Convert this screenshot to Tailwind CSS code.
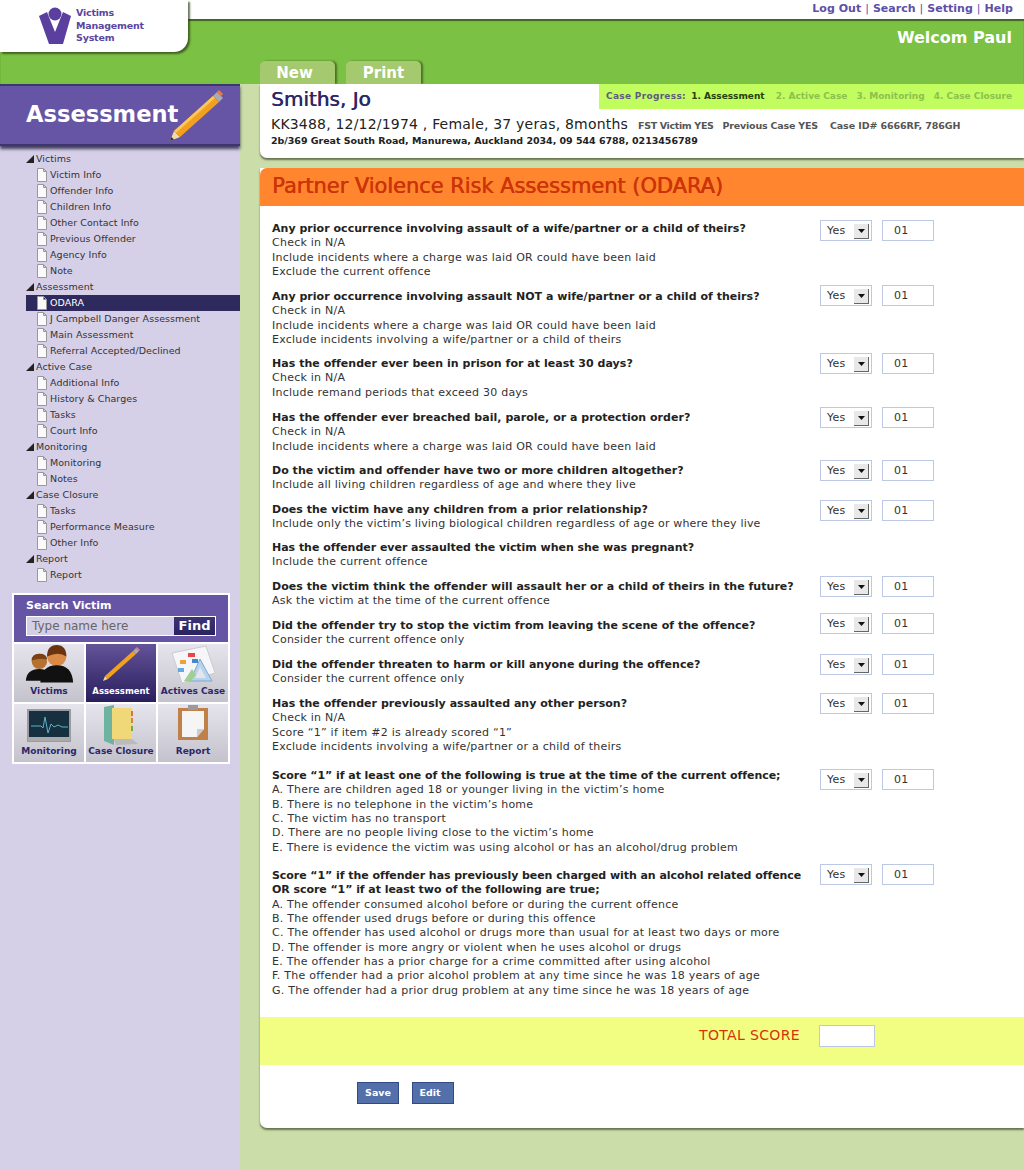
<!DOCTYPE html>
<html lang="en">
<head>
    <meta charset="UTF-8">
    <title>Victims Management System</title>
    <script src="https://cdn.jsdelivr.net/npm/@tailwindcss/browser@4"></script>
</head>
<body class="bg-[#cbdea9] font-['DejaVu_Sans',sans-serif] text-[11px] text-[#333]">
<div class="relative w-[1024px] h-[1170px] overflow-hidden flex flex-col">

    <!-- Logo -->
    <div class="absolute left-0 top-0 z-10 w-[188px] h-[52px] bg-white rounded-br-[14px] shadow-[2px_2px_2px_rgba(40,60,20,0.7)] flex">
        <svg class="ml-[39px] mt-[7px] w-[32px] h-[37px]" viewBox="0 0 32 37">
            <circle cx="16" cy="7" r="6.5" fill="#5b3f9e"/>
            <path d="M0 9 L8 5 L16 25 L24 5 L32 9 L24 37 L10 37 Z" fill="#5b3f9e"/>
        </svg>
        <div class="ml-[5px] mt-[7px] text-[9.5px] tracking-[-0.2px] leading-[12.5px] font-bold text-[#5a46a0]">Victims<br>Management<br>System</div>
    </div>

    <!-- Top links -->
    <div class="h-[19px] bg-white flex justify-end items-center pr-[11px] text-[11px] font-bold text-[#5d50a8] tracking-[0.02px] gap-[4px]">
        <span>Log Out</span><span class="font-normal">|</span><span>Search</span><span class="font-normal">|</span><span>Setting</span><span class="font-normal">|</span><span>Help</span>
    </div>

    <!-- Green band -->
    <div class="h-[65px] bg-[#7bc143] shadow-[inset_0_2px_1px_rgba(40,60,20,0.7)] flex flex-col">
        <div class="text-right pr-[12px] pt-[9px] text-[16px] leading-[20px] font-bold text-white">Welcom Paul</div>
        <div class="mt-auto ml-[260px] flex gap-[11px]">
            <div class="w-[75px] h-[23px] pr-[6px] bg-[#a5c96e] rounded-t-[5px] shadow-[2px_0_2px_rgba(40,60,20,0.6)] text-center text-[15px] leading-[25px] font-bold text-white">New</div>
            <div class="w-[75px] h-[23px] bg-[#a5c96e] rounded-t-[5px] shadow-[2px_0_2px_rgba(40,60,20,0.6)] text-center text-[15px] leading-[25px] font-bold text-white">Print</div>
        </div>
    </div>

    <div class="flex flex-1">
        <!-- Sidebar -->
        <aside class="w-[240px] bg-[#d6cfe8] flex flex-col">
            <div class="h-[62px] bg-[#6655a5] border-y-2 border-[#3f3570] shadow-[0_3px_3px_rgba(30,25,60,0.8)] flex items-center pl-[26px] relative">
                <span class="text-[22.6px] font-bold text-white">Assessment</span>
                <svg class="absolute left-[168px] top-[3px] w-[56px] h-[54px]" viewBox="0 0 56 54">
                    <polygon points="2,52 6,42 12,48" fill="#f3d9a8"/>
                    <polygon points="2,52 3.5,48 6,50.5" fill="#333"/>
                    <polygon points="6,42 45,7 51,13 12,48" fill="#f2a01e"/>
                    <polygon points="6,42 45,7 47,9 8,44" fill="#fbc75a"/>
                    <polygon points="45,7 49,3 55,9 51,13" fill="#a9a9b0"/>
                    <polygon points="49,3 51,1 55,5 53,7" fill="#ee7b3c"/>
                </svg>
            </div>

            <nav class="mt-[5px] pl-[26px] text-[9.5px] leading-[16px] text-[#333] tracking-[0.05px]">
                <div class="flex items-center h-[16px]"><span class="w-[10px] text-[#222]"><svg class="w-[8px] h-[8px]" viewBox="0 0 8 8"><polygon points="0,8 8,0 8,8" fill="#222"/></svg></span>Victims</div>
                <div class="flex items-center h-[16px] pl-[10px]"><svg class="w-[14px] h-[14px] shrink-0" viewBox="0 0 14 14"><path d="M1.5 .5H7.5L10.5 3.5V13.5H1.5Z M7.5 .5V3.5H10.5" fill="#fafafa" stroke="#999"/></svg>Victim Info</div>
                <div class="flex items-center h-[16px] pl-[10px]"><svg class="w-[14px] h-[14px] shrink-0" viewBox="0 0 14 14"><path d="M1.5 .5H7.5L10.5 3.5V13.5H1.5Z M7.5 .5V3.5H10.5" fill="#fafafa" stroke="#999"/></svg>Offender Info</div>
                <div class="flex items-center h-[16px] pl-[10px]"><svg class="w-[14px] h-[14px] shrink-0" viewBox="0 0 14 14"><path d="M1.5 .5H7.5L10.5 3.5V13.5H1.5Z M7.5 .5V3.5H10.5" fill="#fafafa" stroke="#999"/></svg>Children Info</div>
                <div class="flex items-center h-[16px] pl-[10px]"><svg class="w-[14px] h-[14px] shrink-0" viewBox="0 0 14 14"><path d="M1.5 .5H7.5L10.5 3.5V13.5H1.5Z M7.5 .5V3.5H10.5" fill="#fafafa" stroke="#999"/></svg>Other Contact Info</div>
                <div class="flex items-center h-[16px] pl-[10px]"><svg class="w-[14px] h-[14px] shrink-0" viewBox="0 0 14 14"><path d="M1.5 .5H7.5L10.5 3.5V13.5H1.5Z M7.5 .5V3.5H10.5" fill="#fafafa" stroke="#999"/></svg>Previous Offender</div>
                <div class="flex items-center h-[16px] pl-[10px]"><svg class="w-[14px] h-[14px] shrink-0" viewBox="0 0 14 14"><path d="M1.5 .5H7.5L10.5 3.5V13.5H1.5Z M7.5 .5V3.5H10.5" fill="#fafafa" stroke="#999"/></svg>Agency Info</div>
                <div class="flex items-center h-[16px] pl-[10px]"><svg class="w-[14px] h-[14px] shrink-0" viewBox="0 0 14 14"><path d="M1.5 .5H7.5L10.5 3.5V13.5H1.5Z M7.5 .5V3.5H10.5" fill="#fafafa" stroke="#999"/></svg>Note</div>
                <div class="flex items-center h-[16px]"><span class="w-[10px]"><svg class="w-[8px] h-[8px]" viewBox="0 0 8 8"><polygon points="0,8 8,0 8,8" fill="#222"/></svg></span>Assessment</div>
                <div class="flex items-center h-[16px] pl-[10px] bg-[#2f2a5e] text-white"><svg class="w-[14px] h-[14px] shrink-0" viewBox="0 0 14 14"><path d="M1.5 .5H7.5L10.5 3.5V13.5H1.5Z M7.5 .5V3.5H10.5" fill="#fafafa" stroke="#999"/></svg>ODARA</div>
                <div class="flex items-center h-[16px] pl-[10px]"><svg class="w-[14px] h-[14px] shrink-0" viewBox="0 0 14 14"><path d="M1.5 .5H7.5L10.5 3.5V13.5H1.5Z M7.5 .5V3.5H10.5" fill="#fafafa" stroke="#999"/></svg>J Campbell Danger Assessment</div>
                <div class="flex items-center h-[16px] pl-[10px]"><svg class="w-[14px] h-[14px] shrink-0" viewBox="0 0 14 14"><path d="M1.5 .5H7.5L10.5 3.5V13.5H1.5Z M7.5 .5V3.5H10.5" fill="#fafafa" stroke="#999"/></svg>Main Assessment</div>
                <div class="flex items-center h-[16px] pl-[10px]"><svg class="w-[14px] h-[14px] shrink-0" viewBox="0 0 14 14"><path d="M1.5 .5H7.5L10.5 3.5V13.5H1.5Z M7.5 .5V3.5H10.5" fill="#fafafa" stroke="#999"/></svg>Referral Accepted/Declined</div>
                <div class="flex items-center h-[16px]"><span class="w-[10px]"><svg class="w-[8px] h-[8px]" viewBox="0 0 8 8"><polygon points="0,8 8,0 8,8" fill="#222"/></svg></span>Active Case</div>
                <div class="flex items-center h-[16px] pl-[10px]"><svg class="w-[14px] h-[14px] shrink-0" viewBox="0 0 14 14"><path d="M1.5 .5H7.5L10.5 3.5V13.5H1.5Z M7.5 .5V3.5H10.5" fill="#fafafa" stroke="#999"/></svg>Additional Info</div>
                <div class="flex items-center h-[16px] pl-[10px]"><svg class="w-[14px] h-[14px] shrink-0" viewBox="0 0 14 14"><path d="M1.5 .5H7.5L10.5 3.5V13.5H1.5Z M7.5 .5V3.5H10.5" fill="#fafafa" stroke="#999"/></svg>History &amp; Charges</div>
                <div class="flex items-center h-[16px] pl-[10px]"><svg class="w-[14px] h-[14px] shrink-0" viewBox="0 0 14 14"><path d="M1.5 .5H7.5L10.5 3.5V13.5H1.5Z M7.5 .5V3.5H10.5" fill="#fafafa" stroke="#999"/></svg>Tasks</div>
                <div class="flex items-center h-[16px] pl-[10px]"><svg class="w-[14px] h-[14px] shrink-0" viewBox="0 0 14 14"><path d="M1.5 .5H7.5L10.5 3.5V13.5H1.5Z M7.5 .5V3.5H10.5" fill="#fafafa" stroke="#999"/></svg>Court Info</div>
                <div class="flex items-center h-[16px]"><span class="w-[10px]"><svg class="w-[8px] h-[8px]" viewBox="0 0 8 8"><polygon points="0,8 8,0 8,8" fill="#222"/></svg></span>Monitoring</div>
                <div class="flex items-center h-[16px] pl-[10px]"><svg class="w-[14px] h-[14px] shrink-0" viewBox="0 0 14 14"><path d="M1.5 .5H7.5L10.5 3.5V13.5H1.5Z M7.5 .5V3.5H10.5" fill="#fafafa" stroke="#999"/></svg>Monitoring</div>
                <div class="flex items-center h-[16px] pl-[10px]"><svg class="w-[14px] h-[14px] shrink-0" viewBox="0 0 14 14"><path d="M1.5 .5H7.5L10.5 3.5V13.5H1.5Z M7.5 .5V3.5H10.5" fill="#fafafa" stroke="#999"/></svg>Notes</div>
                <div class="flex items-center h-[16px]"><span class="w-[10px]"><svg class="w-[8px] h-[8px]" viewBox="0 0 8 8"><polygon points="0,8 8,0 8,8" fill="#222"/></svg></span>Case Closure</div>
                <div class="flex items-center h-[16px] pl-[10px]"><svg class="w-[14px] h-[14px] shrink-0" viewBox="0 0 14 14"><path d="M1.5 .5H7.5L10.5 3.5V13.5H1.5Z M7.5 .5V3.5H10.5" fill="#fafafa" stroke="#999"/></svg>Tasks</div>
                <div class="flex items-center h-[16px] pl-[10px]"><svg class="w-[14px] h-[14px] shrink-0" viewBox="0 0 14 14"><path d="M1.5 .5H7.5L10.5 3.5V13.5H1.5Z M7.5 .5V3.5H10.5" fill="#fafafa" stroke="#999"/></svg>Performance Measure</div>
                <div class="flex items-center h-[16px] pl-[10px]"><svg class="w-[14px] h-[14px] shrink-0" viewBox="0 0 14 14"><path d="M1.5 .5H7.5L10.5 3.5V13.5H1.5Z M7.5 .5V3.5H10.5" fill="#fafafa" stroke="#999"/></svg>Other Info</div>
                <div class="flex items-center h-[16px]"><span class="w-[10px]"><svg class="w-[8px] h-[8px]" viewBox="0 0 8 8"><polygon points="0,8 8,0 8,8" fill="#222"/></svg></span>Report</div>
                <div class="flex items-center h-[16px] pl-[10px]"><svg class="w-[14px] h-[14px] shrink-0" viewBox="0 0 14 14"><path d="M1.5 .5H7.5L10.5 3.5V13.5H1.5Z M7.5 .5V3.5H10.5" fill="#fafafa" stroke="#999"/></svg>Report</div>
            </nav>

            <!-- Search + tiles -->
            <div class="mt-[10px] ml-[12px] w-[218px] border-2 border-white bg-white">
                <div class="h-[47px] bg-[#6655a5] px-[12px] pt-[3px]">
                    <div class="text-[11px] leading-[15px] font-bold text-white">Search Victim</div>
                    <div class="mt-[3px] h-[20px] border border-white bg-[#d5cfe6] flex">
                        <span class="flex-1 pl-[5px] text-[12px] leading-[18px] text-[#666]">Type name here</span>
                        <span class="w-[41px] bg-gradient-to-b from-[#3d3478] to-[#2a2360] text-center text-[13px] leading-[18px] font-bold text-white">Find</span>
                    </div>
                </div>
                <div class="mt-[2px] grid grid-cols-[70px_70px_70px] grid-rows-[58px_58px] gap-[2px] text-[9px] font-bold text-center text-[#2c2768]">
                    <div class="bg-gradient-to-b from-[#e6e4ec] to-[#c4c2cc] flex flex-col items-center justify-end pb-[4px]">
                        <svg class="w-[52px] h-[42px]" viewBox="0 0 52 42">
                            <circle cx="16" cy="18" r="8" fill="#b5712f"/><path d="M2 38 Q3 26 16 26 Q28 26 30 38 Z" fill="#111"/>
                            <path d="M16 10 Q8 10 8 17 Q16 14 24 16 Q24 10 16 10Z" fill="#7a3f12"/>
                            <circle cx="34" cy="13" r="10" fill="#d98a45"/><path d="M24 13 Q24 1 34 1 Q44 1 44 13 Q36 7 24 13Z" fill="#6b3410"/>
                            <path d="M17 40 Q18 22 34 22 Q50 22 51 40 Z" fill="#111"/>
                        </svg>
                        Victims
                    </div>
                    <div class="bg-gradient-to-b from-[#645399] to-[#2a1f5e] flex flex-col items-center justify-end pb-[4px] text-white text-[8.5px]">
                        <svg class="w-[40px] h-[40px]" viewBox="0 0 40 40">
                            <polygon points="2,36 4,31 7,34" fill="#eed5a0"/><polygon points="4,31 32,6 35,9 7,34" fill="#f2a01e"/>
                            <polygon points="32,6 35,3 38,6 35,9" fill="#aaa"/><polygon points="35,3 36,2 39,5 38,6" fill="#ee7b7b"/>
                        </svg>
                        Assessment
                    </div>
                    <div class="bg-gradient-to-b from-[#e6e4ec] to-[#c4c2cc] flex flex-col items-center justify-end pb-[4px]">
                        <svg class="w-[46px] h-[40px]" viewBox="0 0 46 40">
                            <polygon points="2,8 36,1 45,28 12,38" fill="#f6f6fa" stroke="#ccc"/>
                            <rect x="18" y="8" width="7" height="4" fill="#e44"/><rect x="10" y="15" width="6" height="4" fill="#e8a33a"/><rect x="22" y="14" width="6" height="4" fill="#48c"/><rect x="8" y="23" width="6" height="4" fill="#6ad"/>
                            <polygon points="30,14 42,36 20,36" fill="#b5d3ee" stroke="#7fa8cc"/><polygon points="30,22 36,33 25,33" fill="#e6e4ec"/>
                            <path d="M14 36 L22 24 L26 30 L20 37Z" fill="#9fd08f"/>
                        </svg>
                        Actives Case
                    </div>
                    <div class="bg-gradient-to-b from-[#e6e4ec] to-[#c4c2cc] flex flex-col items-center justify-end pb-[4px]">
                        <svg class="w-[44px] h-[33px] mb-[3px]" viewBox="0 0 44 33">
                            <rect x="1" y="1" width="42" height="31" fill="#16303f" stroke="#9a9aa0" stroke-width="2"/>
                            <rect x="1" y="28" width="42" height="4" fill="#aaa"/>
                            <path d="M4 17H14L16 19L18 8L21 24L24 15L27 18L31 16L35 18H41" fill="none" stroke="#5fb0c8"/>
                        </svg>
                        Monitoring
                    </div>
                    <div class="bg-gradient-to-b from-[#e6e4ec] to-[#c4c2cc] flex flex-col items-center justify-end pb-[4px]">
                        <svg class="w-[38px] h-[40px]" viewBox="0 0 38 40">
                            <polygon points="2,2 12,0 12,40 2,36" fill="#6eb3a0"/>
                            <rect x="10" y="3" width="20" height="31" fill="#f0d878"/>
                            <rect x="29" y="6" width="2" height="5" fill="#d8743c"/><rect x="29" y="13" width="2" height="5" fill="#c84"/><rect x="29" y="21" width="2" height="5" fill="#7a4"/>
                            <polygon points="12,34 30,34 36,39 14,40" fill="#bbb"/>
                        </svg>
                        Case Closure
                    </div>
                    <div class="bg-gradient-to-b from-[#e6e4ec] to-[#c4c2cc] flex flex-col items-center justify-end pb-[4px]">
                        <svg class="w-[30px] h-[35px] mb-[5px]" viewBox="0 0 30 35">
                            <rect x="0" y="3" width="30" height="32" fill="#c08048"/>
                            <rect x="10" y="0" width="10" height="5" fill="#9a9aa0"/>
                            <path d="M4 6H26V24L19 32H4Z" fill="#f5f5f5"/><path d="M26 24L19 32V24Z" fill="#ccc"/>
                        </svg>
                        Report
                    </div>
                </div>
            </div>
        </aside>

        <!-- Main column -->
        <main class="flex-1 pl-[20px]">
            <!-- Person card -->
            <section class="relative h-[74px] bg-white rounded-bl-[7px] shadow-[0_2px_2px_rgba(60,70,40,0.7)] pl-[11px]">
                <div class="absolute right-0 top-0 w-[425px] h-[25px] bg-[#c1fd5f] pl-[7px] flex items-center gap-[9px] whitespace-nowrap text-[9px] font-bold text-[#8dc04e]">
                    <span class="mr-[2px]"><span class="tracking-[0.3px] text-[#5f5a80]">Case Progress:</span> <span class="ml-[2px] text-[#26400c]">1. Assessment</span></span>
                    <span>2. Active Case</span><span>3. Monitoring</span><span>4. Case Closure</span>
                </div>
                <h1 class="pt-[3px] text-[20px] leading-[24px] [text-shadow:0.6px_0_0_#2d2768] text-[#2d2768]">Smiths, Jo</h1>
                <div class="mt-[5px] flex items-baseline text-[#555] text-[9.5px] font-bold">
                    <span class="text-[14px] leading-[16px] tracking-[0.2px] font-normal text-[#222] mr-[10px]">KK3488, 12/12/1974 , Female, 37 yeras, 8months</span>
                    <span class="tracking-[-0.35px]">FST Victim YES</span><span class="ml-[9px] tracking-[-0.2px]">Previous Case YES</span><span class="ml-[12px] tracking-[-0.1px]">Case ID# 6666RF, 786GH</span>
                </div>
                <div class="mt-[1px] text-[9.5px] leading-[13px] tracking-[-0.04px] font-bold text-[#222]">2b/369 Great South Road, Manurewa, Auckland 2034, 09 544 6788, 0213456789</div>
            </section>

            <!-- Form -->
            <section class="mt-[10px] h-[960px] bg-white rounded-bl-[7px] shadow-[0_2px_2px_rgba(60,70,40,0.7)] flex flex-col">
                <h2 class="h-[38px] bg-[#ff862f] rounded-tl-[7px] pl-[12px] text-[21px] tracking-[-0.05px] leading-[36px] [text-shadow:0.6px_0_0_#cc3308] text-[#cc3308]">Partner Violence Risk Assessment (ODARA)</h2>

                <div class="pt-[16px] pl-[12px] leading-[14.33px] tracking-[0.24px] text-[#333]">
                    <div class="flex h-[68px]"><div class="w-[548px]"><b class="block text-[#222] tracking-[0.03px]">Any prior occurrence involving assault of a wife/partner or a child of theirs?</b>Check in N/A<br>Include incidents where a charge was laid OR could have been laid<br>Exclude the current offence</div>
                        <div class="flex gap-[10px] mt-[-2px]"><div class="w-[52px] h-[21px] border border-[#bcc8e4] flex items-center justify-between pl-[6px] pr-[2px] pt-[1px]">Yes<span class="w-[15px] h-[15px] bg-[#e8e8e8] border-r border-b border-[#666] flex items-center justify-center"><svg class="w-[7px] h-[4px]" viewBox="0 0 7 4"><polygon points="0,0 7,0 3.5,4" fill="#111"/></svg></span></div><div class="w-[52px] h-[21px] border border-[#bcc8e4] pl-[11px] leading-[20px]">01</div></div></div>

                    <div class="flex h-[67px]"><div class="w-[548px]"><b class="block text-[#222] tracking-[0.03px]">Any prior occurrence involving assault NOT a wife/partner or a child of theirs?</b>Check in N/A<br>Include incidents where a charge was laid OR could have been laid<br>Exclude incidents involving a wife/partner or a child of theirs</div>
                        <div class="flex gap-[10px] mt-[-5px]"><div class="w-[52px] h-[21px] border border-[#bcc8e4] flex items-center justify-between pl-[6px] pr-[2px] pt-[1px]">Yes<span class="w-[15px] h-[15px] bg-[#e8e8e8] border-r border-b border-[#666] flex items-center justify-center"><svg class="w-[7px] h-[4px]" viewBox="0 0 7 4"><polygon points="0,0 7,0 3.5,4" fill="#111"/></svg></span></div><div class="w-[52px] h-[21px] border border-[#bcc8e4] pl-[11px] leading-[20px]">01</div></div></div>

                    <div class="flex h-[54px]"><div class="w-[548px]"><b class="block text-[#222] tracking-[0.03px]">Has the offender ever been in prison for at least 30 days?</b>Check in N/A<br>Include remand periods that exceed 30 days</div>
                        <div class="flex gap-[10px] mt-[-4px]"><div class="w-[52px] h-[21px] border border-[#bcc8e4] flex items-center justify-between pl-[6px] pr-[2px] pt-[1px]">Yes<span class="w-[15px] h-[15px] bg-[#e8e8e8] border-r border-b border-[#666] flex items-center justify-center"><svg class="w-[7px] h-[4px]" viewBox="0 0 7 4"><polygon points="0,0 7,0 3.5,4" fill="#111"/></svg></span></div><div class="w-[52px] h-[21px] border border-[#bcc8e4] pl-[11px] leading-[20px]">01</div></div></div>

                    <div class="flex h-[53px]"><div class="w-[548px]"><b class="block text-[#222] tracking-[0.03px]">Has the offender ever breached bail, parole, or a protection order?</b>Check in N/A<br>Include incidents where a charge was laid OR could have been laid</div>
                        <div class="flex gap-[10px] mt-[-4px]"><div class="w-[52px] h-[21px] border border-[#bcc8e4] flex items-center justify-between pl-[6px] pr-[2px] pt-[1px]">Yes<span class="w-[15px] h-[15px] bg-[#e8e8e8] border-r border-b border-[#666] flex items-center justify-center"><svg class="w-[7px] h-[4px]" viewBox="0 0 7 4"><polygon points="0,0 7,0 3.5,4" fill="#111"/></svg></span></div><div class="w-[52px] h-[21px] border border-[#bcc8e4] pl-[11px] leading-[20px]">01</div></div></div>

                    <div class="flex h-[39px]"><div class="w-[548px]"><b class="block text-[#222] tracking-[0.03px]">Do the victim and offender have two or more children altogether?</b>Include all living children regardless of age and where they live</div>
                        <div class="flex gap-[10px] mt-[-4px]"><div class="w-[52px] h-[21px] border border-[#bcc8e4] flex items-center justify-between pl-[6px] pr-[2px] pt-[1px]">Yes<span class="w-[15px] h-[15px] bg-[#e8e8e8] border-r border-b border-[#666] flex items-center justify-center"><svg class="w-[7px] h-[4px]" viewBox="0 0 7 4"><polygon points="0,0 7,0 3.5,4" fill="#111"/></svg></span></div><div class="w-[52px] h-[21px] border border-[#bcc8e4] pl-[11px] leading-[20px]">01</div></div></div>

                    <div class="flex h-[38px]"><div class="w-[548px]"><b class="block text-[#222] tracking-[0.03px]">Does the victim have any children from a prior relationship?</b><span class="tracking-[0.17px]">Include only the victim’s living biological children regardless of age or where they live</span></div>
                        <div class="flex gap-[10px] mt-[-3px]"><div class="w-[52px] h-[21px] border border-[#bcc8e4] flex items-center justify-between pl-[6px] pr-[2px] pt-[1px]">Yes<span class="w-[15px] h-[15px] bg-[#e8e8e8] border-r border-b border-[#666] flex items-center justify-center"><svg class="w-[7px] h-[4px]" viewBox="0 0 7 4"><polygon points="0,0 7,0 3.5,4" fill="#111"/></svg></span></div><div class="w-[52px] h-[21px] border border-[#bcc8e4] pl-[11px] leading-[20px]">01</div></div></div>

                    <div class="h-[39px]"><b class="block text-[#222] tracking-[-0.03px]">Has the offender ever assaulted the victim when she was pregnant?</b>Include the current offence</div>

                    <div class="flex h-[39px]"><div class="w-[548px]"><b class="block text-[#222] tracking-[0.03px]">Does the victim think the offender will assault her or a child of theirs in the future?</b>Ask the victim at the time of the current offence</div>
                        <div class="flex gap-[10px] mt-[-4px]"><div class="w-[52px] h-[21px] border border-[#bcc8e4] flex items-center justify-between pl-[6px] pr-[2px] pt-[1px]">Yes<span class="w-[15px] h-[15px] bg-[#e8e8e8] border-r border-b border-[#666] flex items-center justify-center"><svg class="w-[7px] h-[4px]" viewBox="0 0 7 4"><polygon points="0,0 7,0 3.5,4" fill="#111"/></svg></span></div><div class="w-[52px] h-[21px] border border-[#bcc8e4] pl-[11px] leading-[20px]">01</div></div></div>

                    <div class="flex h-[39px]"><div class="w-[548px]"><b class="block text-[#222] tracking-[0.03px]">Did the offender try to stop the victim from leaving the scene of the offence?</b>Consider the current offence only</div>
                        <div class="flex gap-[10px] mt-[-6px]"><div class="w-[52px] h-[21px] border border-[#bcc8e4] flex items-center justify-between pl-[6px] pr-[2px] pt-[1px]">Yes<span class="w-[15px] h-[15px] bg-[#e8e8e8] border-r border-b border-[#666] flex items-center justify-center"><svg class="w-[7px] h-[4px]" viewBox="0 0 7 4"><polygon points="0,0 7,0 3.5,4" fill="#111"/></svg></span></div><div class="w-[52px] h-[21px] border border-[#bcc8e4] pl-[11px] leading-[20px]">01</div></div></div>

                    <div class="flex h-[39px]"><div class="w-[548px]"><b class="block text-[#222] tracking-[0.03px]">Did the offender threaten to harm or kill anyone during the offence?</b>Consider the current offence only</div>
                        <div class="flex gap-[10px] mt-[-4px]"><div class="w-[52px] h-[21px] border border-[#bcc8e4] flex items-center justify-between pl-[6px] pr-[2px] pt-[1px]">Yes<span class="w-[15px] h-[15px] bg-[#e8e8e8] border-r border-b border-[#666] flex items-center justify-center"><svg class="w-[7px] h-[4px]" viewBox="0 0 7 4"><polygon points="0,0 7,0 3.5,4" fill="#111"/></svg></span></div><div class="w-[52px] h-[21px] border border-[#bcc8e4] pl-[11px] leading-[20px]">01</div></div></div>

                    <div class="flex h-[72px]"><div class="w-[548px]"><b class="block text-[#222] tracking-[0.03px]">Has the offender previously assaulted any other person?</b>Check in N/A<br>Score “1” if item #2 is already scored “1”<br>Exclude incidents involving a wife/partner or a child of theirs</div>
                        <div class="flex gap-[10px] mt-[-4px]"><div class="w-[52px] h-[21px] border border-[#bcc8e4] flex items-center justify-between pl-[6px] pr-[2px] pt-[1px]">Yes<span class="w-[15px] h-[15px] bg-[#e8e8e8] border-r border-b border-[#666] flex items-center justify-center"><svg class="w-[7px] h-[4px]" viewBox="0 0 7 4"><polygon points="0,0 7,0 3.5,4" fill="#111"/></svg></span></div><div class="w-[52px] h-[21px] border border-[#bcc8e4] pl-[11px] leading-[20px]">01</div></div></div>

                    <div class="flex h-[100px]"><div class="w-[548px]"><b class="block text-[#222] tracking-[-0.06px]">Score “1” if at least one of the following is true at the time of the current offence;</b>A. There are children aged 18 or younger living in the victim’s home<br>B. There is no telephone in the victim’s home<br>C. The victim has no transport<br>D. There are no people living close to the victim’s home<br>E. There is evidence the victim was using alcohol or has an alcohol/drug problem</div>
                        <div class="flex gap-[10px]"><div class="w-[52px] h-[21px] border border-[#bcc8e4] flex items-center justify-between pl-[6px] pr-[2px] pt-[1px]">Yes<span class="w-[15px] h-[15px] bg-[#e8e8e8] border-r border-b border-[#666] flex items-center justify-center"><svg class="w-[7px] h-[4px]" viewBox="0 0 7 4"><polygon points="0,0 7,0 3.5,4" fill="#111"/></svg></span></div><div class="w-[52px] h-[21px] border border-[#bcc8e4] pl-[11px] leading-[20px]">01</div></div></div>

                    <div class="flex h-[148px]"><div class="w-[548px]"><b class="block text-[#222] tracking-[-0.06px]">Score “1” if the offender has previously been charged with an alcohol related offence<br>OR score “1” if at least two of the following are true;</b>A. The offender consumed alcohol before or during the current offence<br>B. The offender used drugs before or during this offence<br>C. The offender has used alcohol or drugs more than usual for at least two days or more<br>D. The offender is more angry or violent when he uses alcohol or drugs<br>E. The offender has a prior charge for a crime committed after using alcohol<br>F. The offender had a prior alcohol problem at any time since he was 18 years of age<br>G. The offender had a prior drug problem at any time since he was 18 years of age</div>
                        <div class="flex gap-[10px] mt-[-5px]"><div class="w-[52px] h-[21px] border border-[#bcc8e4] flex items-center justify-between pl-[6px] pr-[2px] pt-[1px]">Yes<span class="w-[15px] h-[15px] bg-[#e8e8e8] border-r border-b border-[#666] flex items-center justify-center"><svg class="w-[7px] h-[4px]" viewBox="0 0 7 4"><polygon points="0,0 7,0 3.5,4" fill="#111"/></svg></span></div><div class="w-[52px] h-[21px] border border-[#bcc8e4] pl-[11px] leading-[20px]">01</div></div></div>
                </div>

                <!-- Total -->
                <div class="h-[48px] bg-[#f2fe82] flex items-start pt-[8px] pl-[439px]">
                    <span class="w-[102px] whitespace-nowrap text-[14px] tracking-[0.35px] leading-[20px] text-[#d6330c]">TOTAL SCORE</span>
                    <span class="ml-[18px] w-[56px] h-[22px] bg-white border border-[#bcc8e4]"></span>
                </div>

                <div class="mt-[17px] pl-[97px] flex gap-[13px] text-[9.5px] font-bold text-white">
                    <span class="w-[42px] h-[22px] bg-[#5470ab] border border-[#2f4a85] text-center leading-[20px]">Save</span>
                    <span class="w-[42px] h-[22px] pr-[6px] bg-[#5470ab] border border-[#2f4a85] text-center leading-[20px]">Edit</span>
                </div>
            </section>
        </main>
    </div>
</div>
</body>
</html>
